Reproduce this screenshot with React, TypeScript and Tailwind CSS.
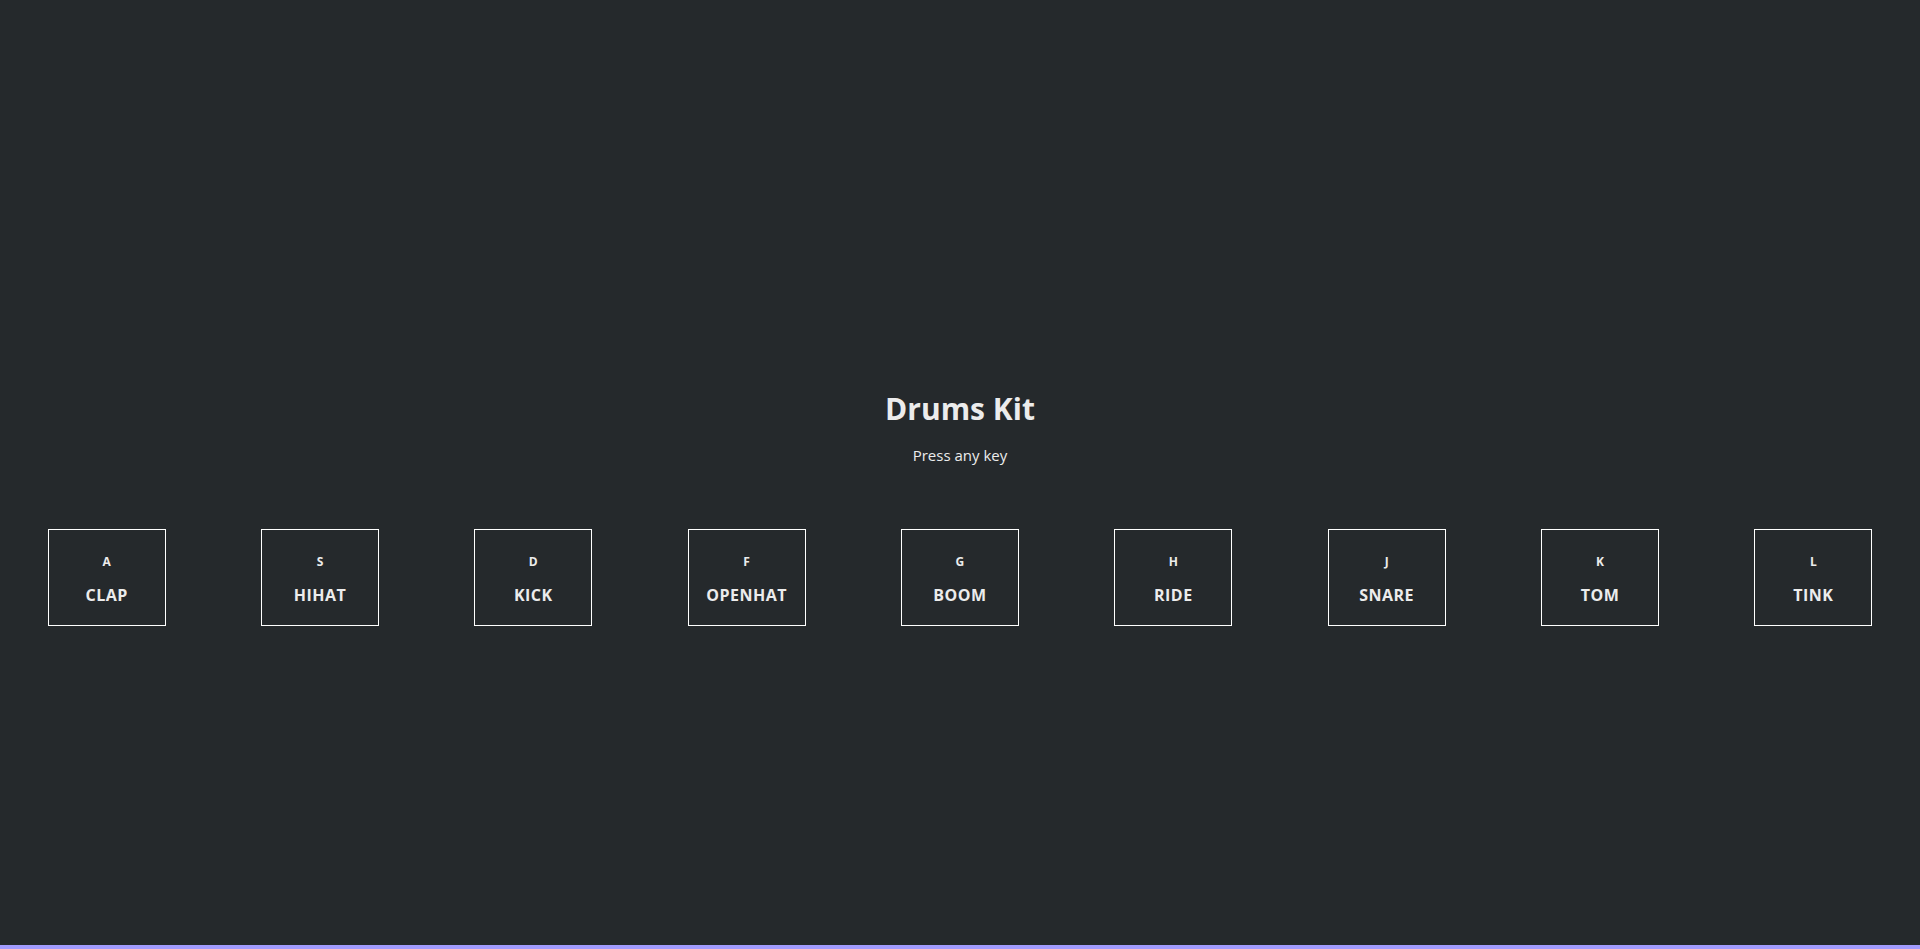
const keys = [
  { key: "A", sound: "CLAP" },
  { key: "S", sound: "HIHAT" },
  { key: "D", sound: "KICK" },
  { key: "F", sound: "OPENHAT" },
  { key: "G", sound: "BOOM" },
  { key: "H", sound: "RIDE" },
  { key: "J", sound: "SNARE" },
  { key: "K", sound: "TOM" },
  { key: "L", sound: "TINK" },
];

function DrumKey({ letter, sound }: { letter: string; sound: string }) {
  return (
    <div className="w-[118px] h-[97px] border border-white flex flex-col items-center pt-[24px]">
      <kbd className="text-[12px] font-bold leading-[16px] font-['Open_Sans',sans-serif]">
        {letter}
      </kbd>
      <span className="mt-[15px] text-[16px] font-bold tracking-[0.5px] leading-[20px]">
        {sound}
      </span>
    </div>
  );
}

export default function App() {
  return (
    <div className="min-h-screen flex flex-col bg-[#25292c] text-[#ececec] font-['Open_Sans',sans-serif]">
      <main className="flex-1 flex flex-col items-center pt-[389px]">
        <h1 className="text-[30px] font-bold leading-[40px]">Drums Kit</h1>
        <p className="mt-[16px] text-[15px] leading-[20px]">Press any key</p>
        <div className="w-full mt-[64px] flex justify-around">
          {keys.map((k) => (
            <DrumKey key={k.key} letter={k.key} sound={k.sound} />
          ))}
        </div>
      </main>
      <div className="h-[4px] bg-[#a29bfe]" />
    </div>
  );
}
